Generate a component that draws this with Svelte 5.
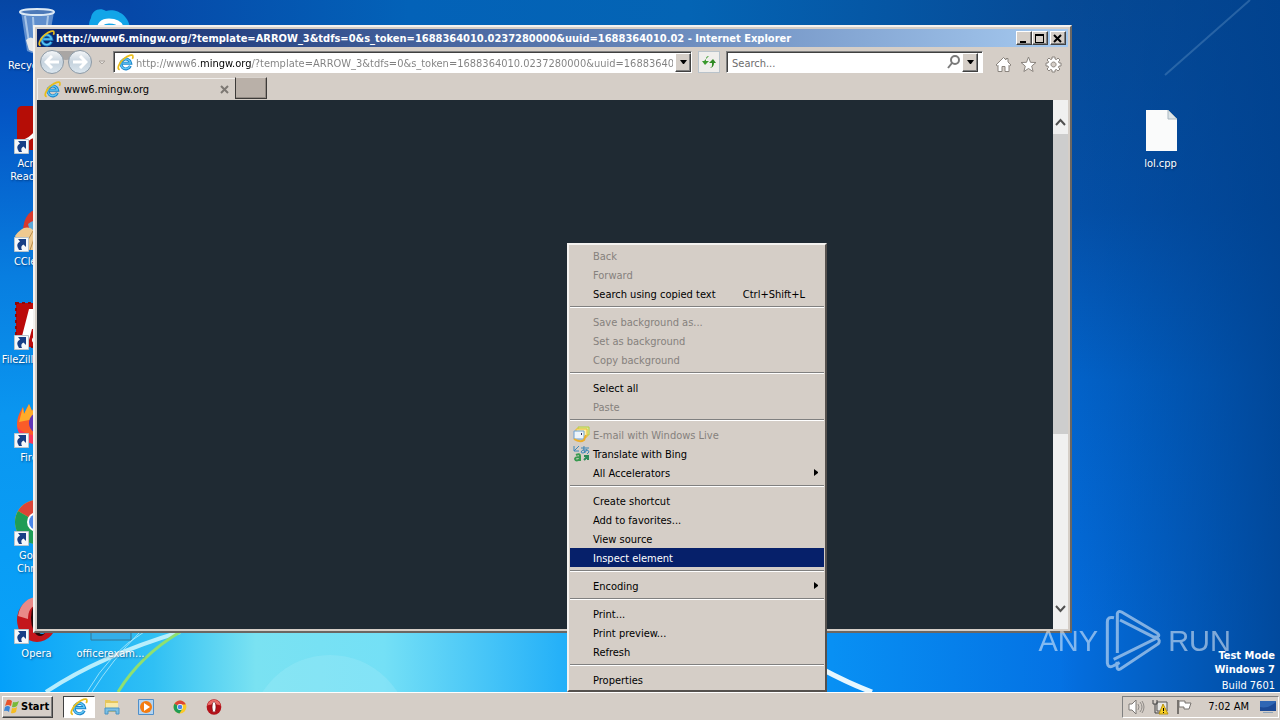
<script lang="ts">
	type MenuItem = {
		label: string;
		shortcut?: string;
		disabled?: boolean;
		submenu?: boolean;
		icon?: 'mail' | 'translate';
	};

	const shortcuts = [
		{ name: 'Recycle Bin', icon: 'bin', col: 1, row: 1, link: false },
		{ name: 'Skype', icon: 'skype', col: 2, row: 1, link: true },
		{ name: 'Acrobat Reader DC', icon: 'acrobat', col: 1, row: 2, link: true },
		{ name: 'CCleaner', icon: 'ccleaner', col: 1, row: 3, link: true },
		{ name: 'FileZilla Client', icon: 'filezilla', col: 1, row: 4, link: true },
		{ name: 'Firefox', icon: 'firefox', col: 1, row: 5, link: true },
		{ name: 'Google Chrome', icon: 'chrome', col: 1, row: 6, link: true },
		{ name: 'Opera', icon: 'opera', col: 1, row: 7, link: true },
		{ name: 'officerexam...', icon: 'file', col: 2, row: 7, link: false },
		{ name: 'lol.cpp', icon: 'page', col: 16, row: 2, link: false }
	];

	const menu: MenuItem[][] = [
		[
			{ label: 'Back', disabled: true },
			{ label: 'Forward', disabled: true },
			{ label: 'Search using copied text', shortcut: 'Ctrl+Shift+L' }
		],
		[
			{ label: 'Save background as...', disabled: true },
			{ label: 'Set as background', disabled: true },
			{ label: 'Copy background', disabled: true }
		],
		[{ label: 'Select all' }, { label: 'Paste', disabled: true }],
		[
			{ label: 'E-mail with Windows Live', disabled: true, icon: 'mail' },
			{ label: 'Translate with Bing', icon: 'translate' },
			{ label: 'All Accelerators', submenu: true }
		],
		[
			{ label: 'Create shortcut' },
			{ label: 'Add to favorites...' },
			{ label: 'View source' },
			{ label: 'Inspect element' }
		],
		[{ label: 'Encoding', submenu: true }],
		[{ label: 'Print...' }, { label: 'Print preview...' }, { label: 'Refresh' }],
		[{ label: 'Properties' }]
	];

	const pageTitle =
		'http://www6.mingw.org/?template=ARROW_3&tdfs=0&s_token=1688364010.0237280000&uuid=1688364010.02 - Internet Explorer';

	let address = $state(
		'http://www6.mingw.org/?template=ARROW_3&tdfs=0&s_token=1688364010.0237280000&uuid=1688364010.0237280000'
	);
	let query = $state('');
	let selected = $state('Inspect element');
</script>

{#snippet ie(size: number)}
	<svg width={size} height={size} viewBox="0 0 16 16" aria-hidden="true">
		<path d="M12.6 11.2A4.600 4.600 0 1 1 12.9 8.6H5" fill="none" stroke="#1c86cc" stroke-width="2.8" />
		<path d="M12.2 11.4A4.600 4.600 0 1 1 12.7 8.6H5" fill="none" stroke="#62c8f4" stroke-width="1.2" />
		<path
			d="M2.6 14.600C-.4 14.6 1.4 8.6 6.6 4.4 10.4 1.2 14.6 0 15 2c.2.8-.2 1.800-.6 2.400"
			fill="none"
			stroke="#e9bd1c"
			stroke-width="1.600"
		/>
	</svg>
{/snippet}

{#snippet chromeLogo(size: number)}
	<svg width={size} height={size} viewBox="0 0 48 48" aria-hidden="true">
		<circle cx="24" cy="24" r="22" fill="#fbc926" />
		<path d="M24 24 5 13A22 22 0 0 1 43 13L42 15H24z" fill="#dc4437" />
		<path d="M24 24 5 13A22 22 0 0 0 22 46L33 29z" fill="#1f9c55" />
		<circle cx="24" cy="24" r="10" fill="#fff" />
		<circle cx="24" cy="24" r="8" fill="#4a86e8" />
	</svg>
{/snippet}

{#snippet operaLogo(size: number)}
	<svg width={size} height={size} viewBox="0 0 48 48" aria-hidden="true">
		<ellipse cx="24" cy="24" rx="22" ry="23" fill="#b3121a" />
		<path d="M4 20C6 8 16 2 24 2s18 6 20 18C34 14 14 14 4 20z" fill="#ea6a66" />
		<ellipse cx="24" cy="24" rx="6" ry="16" fill="#fff" stroke="#6b0a10" stroke-width="2" />
	</svg>
{/snippet}

{#snippet desktopIcon(name: string)}
	{#if name === 'chrome'}
		{@render chromeLogo(48)}
	{:else if name === 'opera'}
		<svg width="48" height="48" viewBox="0 0 48 48" aria-hidden="true">
			<ellipse cx="24" cy="24" rx="20" ry="22" fill="#c4161c" />
			<path d="M5 20C7 7 16 1 24 1v8c-6 1-9 6-9 14z" fill="#e98a88" />
			<ellipse cx="27" cy="22" rx="9" ry="18" fill="#25090b" />
			<ellipse cx="29" cy="22" rx="8" ry="16" fill="#1ea4f0" />
		</svg>
	{:else}
		<svg width="48" height="48" viewBox="0 0 48 48" aria-hidden="true">
			{#if name === 'bin'}
				<path d="M8 4 14 43q10 5 20 0L41 4z" fill="#7fa6d8" opacity=".75" />
				<path d="M12 8 17 41M20 9l2 34M35 8l-4 34" stroke="#c6dcf2" stroke-width="2" opacity=".7" />
				<path d="M13 32q5-5 9 0t9-2l3-2-3 14q-8 4-15 0z" fill="#e6e8ea" />
				<ellipse cx="24" cy="4" rx="17" ry="3" fill="#4d79b8" stroke="#dce9f5" stroke-width="2" />
			{:else if name === 'skype'}
				<path d="M4 10C5 2 13-1 19 3 30 0 43 8 43 22c5 8 2 22-12 21C15 48 2 38 4 24 1 19 2 13 4 10z" fill="#12a5e8" />
				<path d="M34 19c-2-5-7-6-12-6-7 0-10 4-9 8 2 8 19 4 19 11 0 6-16 6-19-1" fill="none" stroke="#fff" stroke-width="5" />
			{:else if name === 'acrobat'}
				<rect x="4" y="0" width="44" height="44" rx="5" fill="#b50d06" />
				<path d="M13 34C24 29 28 18 25 9c-2-5 3-5 2 0-1 11 6 17 13 18 5 2 2 5-3 3-8-4-18 0-24 5z" fill="none" stroke="#fff" stroke-width="3" />
			{:else if name === 'ccleaner'}
				<path d="M10 28C10 12 18 4 30 4l10 6-6 22z" fill="#d8382c" />
				<path d="M15 20q7-6 18-4v12H17z" fill="#5ba7d8" />
				<path d="M2 32C8 24 14 21 20 26l22 8v12H8z" fill="#efc990" />
				<path d="M10 45 20 27M17 46l6-17" stroke="#b98d4c" />
			{:else if name === 'filezilla'}
				<rect x="3" y="1" width="44" height="44" fill="#bb0a0a" stroke="#8e0909" stroke-width="2" stroke-dasharray="3 3" />
				<path d="M16 7h24l-2 7H22l-1 6h14l-2 7H19l-3 11H8z" fill="#fff" />
				<circle cx="22" cy="38" r="3" fill="#fff" />
			{:else if name === 'firefox'}
				<path d="M4 26C4 16 7 12 10 7l1 7 5-10 3 7 6-9C42 5 47 18 44 30 41 49 7 50 4 26z" fill="#fb5c28" />
				<path d="M10 7l1 7 5-10 3 7 6-9c6 6 12 11 10 20L16 20 6 22z" fill="#ffac29" />
				<circle cx="27" cy="23" r="11" fill="#6035b6" />
				<path d="M4 27q12 12 26 6l-5 11Q9 45 4 27z" fill="#f9365a" />
			{:else if name === 'file'}
				<path d="M4 2h40v42H4z" fill="#35aee8" stroke="#357696" />
			{:else}
				<path d="M9 4h22l9 9v32H9z" fill="#fafbfb" />
				<path d="M31 4v9h9z" fill="#dce4e8" stroke="#a9b7c0" />
			{/if}
		</svg>
	{/if}
{/snippet}

<main class="screen">
	<div class="desktop">
		<svg class="wallpaper" viewBox="0 0 1280 692" preserveAspectRatio="none" aria-hidden="true">
			<defs>
				<linearGradient id="left" x1="0" y1="0" x2="0" y2="1">
					<stop offset="0" stop-color="#0646a4" />
					<stop offset=".16" stop-color="#0455c4" />
					<stop offset=".4" stop-color="#087ee0" />
					<stop offset=".6" stop-color="#0a96f0" />
					<stop offset="1" stop-color="#08a4fa" />
				</linearGradient>
				<linearGradient id="right" x1="0" y1="0" x2="0" y2="1">
					<stop offset="0" stop-color="#064a96" />
					<stop offset=".3" stop-color="#0450a8" />
					<stop offset=".55" stop-color="#0264cc" />
					<stop offset="1" stop-color="#0470e4" />
				</linearGradient>
				<linearGradient id="edge" x1="0" y1="0" x2="1" y2="0">
					<stop offset="0" stop-color="#00408c" stop-opacity="0" />
					<stop offset="1" stop-color="#00408c" stop-opacity=".8" />
				</linearGradient>
				<linearGradient id="top" x1="0" y1="0" x2="1" y2="0">
					<stop offset="0" stop-color="#0648a8" />
					<stop offset=".3" stop-color="#0362b8" />
					<stop offset=".6" stop-color="#0464b4" />
					<stop offset="1" stop-color="#064a96" />
				</linearGradient>
				<linearGradient id="floor" x1="0" y1="0" x2="1" y2="0">
					<stop offset="0" stop-color="#04a0fa" />
					<stop offset=".12" stop-color="#30c0f4" />
					<stop offset=".2" stop-color="#7ae2f2" />
					<stop offset=".3" stop-color="#74e0f6" />
					<stop offset=".44" stop-color="#24b0f8" />
					<stop offset=".65" stop-color="#0890f4" />
					<stop offset=".84" stop-color="#0470e2" />
					<stop offset="1" stop-color="#0470e2" />
				</linearGradient>
			</defs>
			<rect width="640" height="692" fill="url(#left)" />
			<rect x="640" width="640" height="692" fill="url(#right)" />
			<rect y="630" width="1280" height="62" fill="url(#floor)" />
			<rect x="1060" width="220" height="692" fill="url(#edge)" />
			<rect x="130" width="930" height="40" fill="url(#top)" />
			<path d="M1165 75 1250 0" stroke="#5f92c4" stroke-width="2" opacity=".4" />
			<circle cx="330" cy="735" r="80" fill="#a4ecf8" opacity=".3" />
			<path d="M46 692Q100 656 180 632" fill="none" stroke="#c9f4fd" stroke-width="4" opacity=".9" />
			<path d="M87 692Q110 652 144 632M92 692Q112 660 140 632" fill="none" stroke="#b4ecfb" opacity=".8" />
			<path d="M118 692Q140 656 180 632" fill="none" stroke="#8fe070" stroke-width="3" />
			<path d="M820 668Q850 684 872 692" fill="none" stroke="#e6f7ff" stroke-width="5" />
		</svg>

		<div class="icon-grid">
			{#each shortcuts as item}
				<button
					type="button"
					class="desktop-icon"
					style="grid-column: {item.col}; grid-row: {item.row}"
				>
					<span class="picture">
						{@render desktopIcon(item.icon)}
						{#if item.link}
							<svg class="link-arrow" width="15" height="15" viewBox="0 0 15 15" aria-hidden="true">
								<path d="M.5.5h14v14H.5z" fill="#f5f8fa" stroke="#b9c4cc" />
								<path d="M5 13Q1 7 6 4.500L4 2h8v8L9.500 7.500Q6 9 8 13z" fill="#173f86" />
							</svg>
						{/if}
					</span>
					<span class="caption">{item.name}</span>
				</button>
			{/each}
		</div>

		<section class="window" aria-label="Internet Explorer">
			<header class="title-bar">
				{@render ie(17)}
				<h1>{pageTitle}</h1>
				<div class="window-buttons">
					<button type="button" class="raised" aria-label="Minimize">
						<svg width="10" height="9" viewBox="0 0 10 9"><path d="M1 7h6v2H1z" /></svg>
					</button>
					<button type="button" class="raised" aria-label="Maximize">
						<svg width="10" height="9" viewBox="0 0 10 9">
							<path d="M0 0h9v9H0zM1 2v6h7V2z" fill-rule="evenodd" />
						</svg>
					</button>
					<button type="button" class="raised close" aria-label="Close">
						<svg width="10" height="9" viewBox="0 0 10 9">
							<path d="M1 1l7 7M8 1 1 8" stroke="#000" stroke-width="2" />
						</svg>
					</button>
				</div>
			</header>

			<div class="nav-bar">
				<div class="history">
					<svg width="56" height="26" viewBox="0 0 56 26" aria-hidden="true">
						<path d="M13 1h29v6q-14 6-29 0z" fill="#a9a6a4" />
					</svg>
					<button type="button" aria-label="Back">
						<svg width="16" height="14" viewBox="0 0 16 14">
							<path d="M15 7H3M8 1 2 7l6 6" />
						</svg>
					</button>
					<button type="button" aria-label="Forward">
						<svg width="16" height="14" viewBox="0 0 16 14">
							<path d="M1 7h12M8 1l6 6-6 6" />
						</svg>
					</button>
				</div>
				<button type="button" class="recent" aria-label="Recent pages">
					<svg width="8" height="5" viewBox="0 0 8 5">
						<path d="M1 1h6L4 4z" fill="#e6e2de" stroke="#aaa49e" />
					</svg>
				</button>
				<div class="field address">
					{@render ie(17)}
					<input type="text" aria-label="Address" bind:value={address} />
					<button type="button" class="raised drop" aria-label="Show addresses">
						<svg width="7" height="4" viewBox="0 0 7 4"><path d="M0 0h7L4 4H3z" /></svg>
					</button>
				</div>
				<button type="button" class="refresh" aria-label="Refresh">
					<svg width="14" height="14" viewBox="0 0 14 14">
						<path d="M7 1Q4 1 4 4v2h3L3 10 0 6h2" fill="#3b9a2d" />
						<path d="M7 13q3 0 3-3V8H7l4-4 3 4h-2q0 5-5 5z" fill="#2f8a24" />
					</svg>
				</button>
				<div class="field search">
					<input type="search" aria-label="Search" placeholder="Search..." bind:value={query} />
					<svg width="14" height="14" viewBox="0 0 14 14" aria-hidden="true">
						<circle cx="8" cy="5" r="4" fill="none" stroke="#7a7a7a" stroke-width="2" />
						<path d="M5 8 1 13" stroke="#7a7a7a" stroke-width="2" />
					</svg>
					<button type="button" class="raised drop" aria-label="Search options">
						<svg width="7" height="4" viewBox="0 0 7 4"><path d="M0 0h7L4 4H3z" /></svg>
					</button>
				</div>
				<div class="tools">
					<button type="button" aria-label="Home">
						<svg width="17" height="17" viewBox="0 0 17 17">
							<path d="M1 9l7.500-7.500 2.500 2.500V2.500h2V6l3 3-1.500 1-.5-.5V15.500h-4V10.500H7v5H3V9.500L2.500 10z" />
						</svg>
					</button>
					<button type="button" aria-label="Favorites">
						<svg width="17" height="17" viewBox="0 0 17 17">
							<path d="M8.500 1l2 5.300 5.500.2-4.300 3.600 1.400 5.400-4.600-3-4.600 3 1.400-5.400L1 6.500l5.500-.2z" />
						</svg>
					</button>
					<button type="button" aria-label="Tools">
						<svg width="17" height="17" viewBox="0 0 17 17">
							<path
								d="M7 1h3v2l1.500.6L13 2l2 2-1.500 1.500.6 1.500H16v3h-2l-.6 1.500L15 13l-2 2-1.500-1.500-1.500.6V16H7v-2l-1.500-.6L4 15l-2-2 1.500-1.500L3 10H1V7h2l.6-1.500L2 4l2-2 1.500 1.500L7 3zM8.500 6a2.500 2.500 0 1 0 .1 0z"
								fill-rule="evenodd"
							/>
						</svg>
					</button>
				</div>
			</div>

			<div class="tab-bar" role="tablist">
				<div class="tab" role="tab" aria-selected="true" tabindex="0">
					{@render ie(17)}
					<span>www6.mingw.org</span>
					<button type="button" aria-label="Close tab">
						<svg width="9" height="9" viewBox="0 0 9 9">
							<path d="M1 1l7 7M8 1 1 8" stroke="#7d7873" stroke-width="2" />
						</svg>
					</button>
				</div>
				<button type="button" class="new-tab" aria-label="New tab"></button>
			</div>

			<div class="viewport">
				<div class="page"></div>
				<div class="scrollbar">
					<button type="button" aria-label="Scroll up">
						<svg width="11" height="8" viewBox="0 0 11 8"><path d="M1 7l4.500-5L10 7" /></svg>
					</button>
					<div class="track"><div class="thumb"></div></div>
					<button type="button" aria-label="Scroll down">
						<svg width="11" height="8" viewBox="0 0 11 8"><path d="M1 1l4.500 5L10 1" /></svg>
					</button>
				</div>
			</div>
		</section>

		<div class="watermark" aria-label="ANY RUN">
			<span>ANY</span>
			<svg width="58" height="66" viewBox="265 55 174 198" aria-hidden="true">
				<path d="M295 84Q275 80 275 97V220Q277 236 292 229L312 219" />
				<path d="M305 190V72Q307 62 318 67L424 130Q434 138 426 142L412 141 313 91" />
				<path d="M294 209 424 145Q436 152 427 163L314 238Q304 243 304 230V216" />
			</svg>
			<span>RUN</span>
		</div>

		<div class="build">
			<strong>Test Mode</strong>
			<strong>Windows 7</strong>
			<span>Build 7601</span>
		</div>

		<div class="context-menu" role="menu">
			{#each menu as group, i}
				{#if i > 0}
					<hr />
				{/if}
				{#each group as item}
					<button
						type="button"
						role="menuitem"
						class="menu-item"
						class:selected={selected === item.label}
						disabled={item.disabled}
						onmouseenter={() => (selected = item.label)}
					>
						<span class="menu-icon">
							{#if item.icon === 'mail'}
								<svg width="17" height="17" viewBox="0 0 17 17" aria-hidden="true">
									<path d="M5 1h11v8H5z" fill="#d8ec9c" stroke="#b6cc3c" />
									<path d="M3 3h11v8H3z" fill="#fff0b0" stroke="#e8b82c" />
									<path d="M1 5h10v8H1z" fill="#eef5fb" stroke="#6d9fd0" />
									<path d="M1 13q6 4 10 1l2-5" fill="none" stroke="#ecae2c" stroke-width="2" />
									<path d="M8 7h1v2H8z" fill="#335" />
								</svg>
							{:else if item.icon === 'translate'}
								<svg width="17" height="17" viewBox="0 0 17 17" aria-hidden="true">
									<path d="M1 1v5h5M1 6l5-5" fill="none" stroke="#3c86b8" />
									<path d="M8 3h8M11 1q-1 4 1 7M14 4q-1 4-4 4-2 0-2-1 1-3 5-2 3 0 3 2l-2 2" fill="none" stroke="#3c86b8" />
									<path d="M3 10q4-2 4 1v5M7 12q-5 0-5 2 1 3 5 0" fill="none" stroke="#3a9a50" stroke-width="2" />
									<path d="M11 11h4v4M15 11l-4 4" fill="none" stroke="#2c8a58" stroke-width="2" />
								</svg>
							{/if}
						</span>
						<span class="menu-label">{item.label}</span>
						{#if item.shortcut}
							<span class="menu-shortcut">{item.shortcut}</span>
						{/if}
						{#if item.submenu}
							<svg class="menu-arrow" width="4" height="7" viewBox="0 0 4 7" aria-hidden="true">
								<path d="M0 0l4 3v1L0 7z" />
							</svg>
						{/if}
					</button>
				{/each}
			{/each}
		</div>
	</div>

	<footer class="taskbar">
		<button type="button" class="raised start">
			<svg width="17" height="16" viewBox="0 0 17 16" aria-hidden="true">
				<path d="M3 1q3-1 5 1L7 7Q4 5 1 7z" fill="#e8532a" />
				<path d="M9 3q3 1 6-1l-2 5q-3 2-5 1z" fill="#78b93a" />
				<path d="M1 8q3-2 5 0l-1 5q-2-2-5-1z" fill="#3d86d6" />
				<path d="M8 9q2 1 5-1l-1 5q-3 2-5 1z" fill="#f6bd22" />
			</svg>
			Start
		</button>
		<button type="button" class="task active" aria-label="Internet Explorer">
			{@render ie(18)}
		</button>
		<button type="button" class="task" aria-label="Windows Explorer">
			<svg width="16" height="16" viewBox="0 0 16 16" aria-hidden="true">
				<path d="M1 1h5l1 1h7v11H1z" fill="#e6c65c" />
				<path d="M2 4h12v8H2z" fill="#f8e9a8" />
				<path d="M1 9h14v6h-3v-3H4v3H1z" fill="#7cc0e4" stroke="#4a94c4" />
			</svg>
		</button>
		<button type="button" class="task" aria-label="Media Player">
			<svg width="16" height="16" viewBox="0 0 16 16" aria-hidden="true">
				<path d="M.5.5h15v15H.5z" fill="#b4d4f0" stroke="#4f8fca" />
				<circle cx="8" cy="8" r="6" fill="#f47c10" />
				<path d="M6 4l6 4-6 4z" fill="#fff" />
			</svg>
		</button>
		<button type="button" class="task" aria-label="Google Chrome">
			{@render chromeLogo(14)}
		</button>
		<button type="button" class="task" aria-label="Opera">
			{@render operaLogo(16)}
		</button>
		<div class="tray">
			<svg width="17" height="16" viewBox="0 0 17 16" aria-hidden="true">
				<path d="M1 5h3l4-4v14l-4-4H1z" fill="#fff" stroke="#7c7874" />
				<path d="M10 5q2 3 0 6M12 3q4 5 0 10M14 2q4 6 0 12" fill="none" stroke="#8f8b87" />
			</svg>
			<svg width="17" height="16" viewBox="0 0 17 16" aria-hidden="true">
				<path d="M5 3h10v9H5z" fill="#e8e8e6" stroke="#555" />
				<path d="M1 1v4h4V1M3 5v9h5" fill="none" stroke="#444" />
				<path d="M11 5l5 10H7z" fill="#f8d024" stroke="#b89210" />
				<path d="M11 9h1v3h-1zM11 13h1v1h-1z" />
			</svg>
			<svg width="17" height="16" viewBox="0 0 17 16" aria-hidden="true">
				<path d="M2 1v14" stroke="#77736f" stroke-width="2" />
				<path d="M3 2h6v2h6l-2 6H8V8H3z" fill="#fff" stroke="#77736f" />
			</svg>
			<time>7:02 AM</time>
			<svg width="16" height="14" viewBox="0 0 16 14" aria-hidden="true">
				<path d="M0 1h16v10H0z" fill="#2f66b4" />
				<path d="M0 7q8 2 16-5v9H0z" fill="#1c4a96" />
				<path d="M3 12h10v1H3z" fill="#8fa4b8" />
			</svg>
		</div>
	</footer>
</main>

<style>
	:global(body) {
		margin: 0;
	}

	.screen {
		--face: #d5cec7;
		--dark: #404040;
		--shadow: #808080;
		display: flex;
		flex-direction: column;
		min-height: 100vh;
		font-family: 'DejaVu Sans Condensed', 'DejaVu Sans', sans-serif;
		font-size: 11px;
		line-height: 13px;
		color: #000;
	}

	button,
	input {
		font: inherit;
		color: inherit;
		margin: 0;
		padding: 0;
		border: 0;
		border-radius: 0;
		background: none;
		outline: none;
	}

	svg {
		display: block;
		flex: none;
	}

	.desktop {
		position: relative;
		flex: 1;
	}

	.wallpaper {
		position: absolute;
		inset: 0;
		width: 100%;
		height: 100%;
	}

	.icon-grid {
		position: relative;
		display: grid;
		grid-template-columns: 73px repeat(15, 75px);
		grid-auto-rows: 98px;
	}

	.desktop-icon {
		display: flex;
		flex-direction: column;
		align-items: center;
		gap: 3px;
		padding-top: 8px;
		color: #fff;
		text-shadow: 1px 1px 2px rgba(0, 20, 60, 0.6);
	}

	.picture {
		position: relative;
	}

	.link-arrow {
		position: absolute;
		left: 1px;
		bottom: 0;
	}

	.caption {
		max-width: 73px;
	}

	.raised {
		display: flex;
		align-items: center;
		justify-content: center;
		background: var(--face);
		border: 1px solid;
		border-color: #fff var(--dark) var(--dark) #fff;
		box-shadow: inset -1px -1px var(--shadow);
	}

	/* window */
	.window {
		position: absolute;
		top: 25px;
		right: 208px;
		bottom: 59px;
		left: 33px;
		display: flex;
		flex-direction: column;
		box-sizing: border-box;
		padding: 2px;
		background: var(--face);
		border: 2px solid;
		border-color: #f4f2f0 #6b6763 #6b6763 #f4f2f0;
	}

	.title-bar {
		display: flex;
		align-items: center;
		gap: 1px;
		height: 18px;
		padding: 0 2px 0 1px;
		background: linear-gradient(to right, #0a246a, #a6caf0);
		color: #fff;
	}

	h1 {
		flex: 1;
		min-width: 0;
		margin: 0;
		overflow: hidden;
		white-space: nowrap;
		font-size: 11px;
		font-weight: bold;
	}

	.window-buttons {
		display: flex;
	}

	.window-buttons .raised {
		width: 16px;
		height: 14px;
	}

	.window-buttons .close {
		margin-left: 2px;
	}

	.nav-bar {
		display: flex;
		align-items: center;
		height: 30px;
	}

	.history {
		position: relative;
		display: flex;
		gap: 4px;
		padding-left: 3px;
	}

	.history > svg {
		position: absolute;
		top: 0;
		left: 1px;
	}

	.history button {
		position: relative;
		display: flex;
		align-items: center;
		justify-content: center;
		width: 24px;
		height: 24px;
		border: 1px solid #8c9aa6;
		border-radius: 50%;
		background: linear-gradient(#f4f6f8, #c6d3de 50%, #dbe6ee);
		box-sizing: border-box;
	}

	.history path {
		fill: none;
		stroke: #fff;
		stroke-width: 3;
	}

	.history > svg path {
		fill: #a9a6a4;
		stroke: none;
	}

	.recent {
		padding: 0 7px 0 6px;
	}

	.field {
		display: flex;
		align-items: center;
		box-sizing: border-box;
		height: 22px;
		background: #fff;
		border: 1px solid;
		border-color: var(--shadow) #fff #fff var(--shadow);
		box-shadow: inset 1px 1px var(--dark);
	}

	.field input {
		flex: 1;
		min-width: 0;
		height: 18px;
		padding-top: 2px;
	}

	.address {
		flex: 70;
		gap: 2px;
		padding-left: 3px;
	}

	/* the host name stands out from the rest of the address */
	.address input {
		background: linear-gradient(to right, #808080 65px, #000 65px, #000 115px, #808080 115px);
		background-clip: text;
		-webkit-background-clip: text;
		color: transparent;
	}

	.drop {
		width: 16px;
		height: 19px;
		box-sizing: border-box;
	}

	.refresh {
		display: flex;
		align-items: center;
		justify-content: center;
		width: 22px;
		height: 22px;
		margin: 0 6px;
		box-sizing: border-box;
		background: #f0eeec;
		border: 1px solid #b9c3cb;
	}

	.search {
		flex: 30;
		gap: 1px;
		padding: 0 4px 0 5px;
	}

	.search input {
		appearance: none;
	}

	.search input::placeholder {
		color: #6d6d6d;
		opacity: 1;
	}

	.tools {
		display: flex;
		gap: 8px;
		padding: 4px 6px 0 12px;
	}

	.tools path {
		fill: #fff;
		stroke: #8a847e;
	}

	.tab-bar {
		display: flex;
		height: 23px;
	}

	.tab {
		display: flex;
		align-items: center;
		gap: 3px;
		width: 191px;
		margin-top: 1px;
		padding: 0 0 0 6px;
		border: 1px solid #f1eeeb;
		border-width: 1px 0 0 1px;
	}

	.tab span {
		flex: 1;
	}

	.tab button {
		margin-right: 6px;
	}

	.new-tab {
		width: 32px;
		height: 22px;
		background: #b9b0a8;
		border: 1px solid #3c3a38;
		border-top-color: #d9d3cd;
		box-shadow: inset -1px -1px #938b84;
	}

	.viewport {
		display: flex;
		flex: 1;
	}

	.page {
		flex: 1;
		background: #1f2a33;
	}

	.scrollbar {
		display: flex;
		flex-direction: column;
		width: 15px;
		background: #f0f0f0;
	}

	.scrollbar button {
		display: flex;
		align-items: center;
		justify-content: center;
		height: 34px;
		padding-top: 9px;
		box-sizing: border-box;
	}

	.scrollbar button:last-child {
		padding: 0 0 6px;
	}

	.scrollbar path {
		fill: none;
		stroke: #505050;
		stroke-width: 2;
	}

	.track {
		flex: 1;
	}

	.thumb {
		height: 65%;
		background: #cdcdcd;
	}

	/* overlays in the desktop corner */
	.watermark {
		position: absolute;
		right: 49px;
		bottom: 18px;
		display: flex;
		align-items: center;
		gap: 6px;
		color: #fff;
		opacity: 0.5;
		font-family: 'Liberation Sans Narrow', 'Liberation Sans', sans-serif;
		font-size: 29px;
		line-height: 30px;
	}

	.watermark path {
		fill: none;
		stroke: #fff;
		stroke-width: 9;
	}

	.build {
		position: absolute;
		right: 5px;
		bottom: 0;
		display: flex;
		flex-direction: column;
		gap: 1px;
		color: #fff;
		text-align: right;
	}

	.build span {
		margin-top: 2px;
	}

	/* context menu */
	.context-menu {
		position: absolute;
		z-index: 1;
		top: 243px;
		left: 567px;
		display: flex;
		flex-direction: column;
		width: 254px;
		padding: 1px;
		background: var(--face);
		border: 2px solid;
		border-color: #f4f2f0 #55514e #55514e #f4f2f0;
	}

	hr {
		box-sizing: border-box;
		width: 100%;
		height: 2px;
		margin: 3px 0 4px;
		border: 0;
		border-top: 1px solid #808080;
		border-bottom: 1px solid #fff;
	}

	.menu-item {
		display: flex;
		align-items: center;
		height: 19px;
		text-align: left;
	}

	.menu-item:disabled {
		color: #85817d;
	}

	.menu-item.selected {
		background: #06206a;
		color: #fff;
	}

	.menu-icon {
		width: 20px;
		padding-left: 3px;
	}

	.menu-label,
	.menu-shortcut {
		padding-top: 2px;
	}

	.menu-label {
		flex: 1;
	}

	.menu-shortcut {
		padding-right: 19px;
	}

	.menu-arrow {
		margin-right: 6px;
	}

	/* taskbar */
	.taskbar {
		display: flex;
		align-items: center;
		height: 25px;
		padding: 1px 1px 1px 2px;
		background: var(--face);
		border-top: 1px solid #fff;
	}

	.start {
		height: 22px;
		padding: 0 3px 0 1px;
		margin-right: 10px;
		font-weight: bold;
	}

	.task {
		display: flex;
		align-items: center;
		justify-content: center;
		width: 34px;
		height: 22px;
		box-sizing: border-box;
	}

	.task.active {
		width: 32px;
		background: #fff;
		border: 1px solid;
		border-color: var(--dark) #fff #fff var(--dark);
	}

	.tray {
		display: flex;
		align-items: center;
		gap: 7px;
		height: 20px;
		margin-left: auto;
		padding: 0 2px 0 5px;
		border: 1px solid;
		border-color: var(--shadow) #fff #fff var(--shadow);
	}

	time {
		padding: 0 4px 0 8px;
	}
</style>
